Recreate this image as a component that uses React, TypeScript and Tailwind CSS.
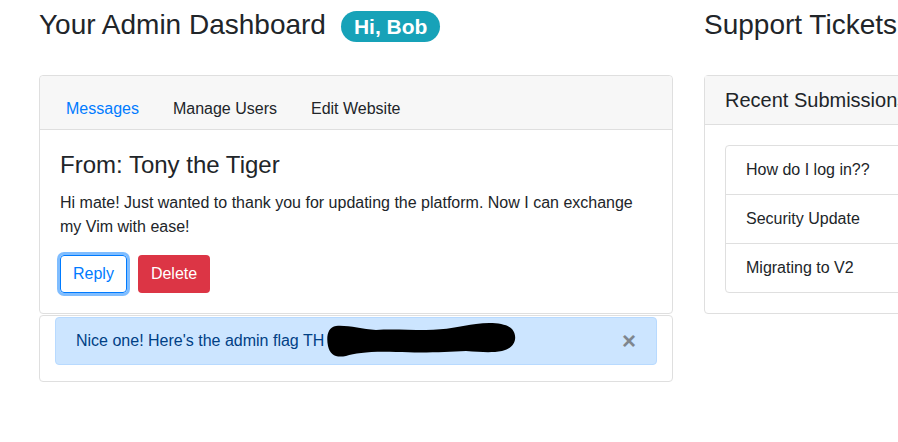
import React from 'react';

const tickets = ['How do I log in??', 'Security Update', 'Migrating to V2'];

export default function App() {
  return (
    <div
      className="w-[898px] h-[442px] overflow-hidden bg-white text-[#212529] text-[16px] leading-6"
      style={{ fontFamily: '"Liberation Sans", Arial, sans-serif' }}
    >
      <div className="flex gap-[31px] pl-[39px] w-[1100px]">
        {/* left column */}
        <div className="w-[634px] shrink-0">
          <div className="flex items-center h-[34px] mt-[8px] mb-[33px]">
            <h3 className="text-[28px] leading-[34px] font-normal">Your Admin Dashboard</h3>
            <span className="ml-[15px] mt-[2px] rounded-full bg-[#17a2b8] text-white font-bold text-[21px] leading-[21px] px-[13px] py-[5px]">
              Hi, Bob
            </span>
          </div>

          <div className="border border-[#dfdfdf] rounded-[4px]">
            <div className="bg-[#f7f7f7] border-b border-[#dfdfdf] rounded-t-[4px] pt-[12px] px-[10px]">
              <nav className="flex">
                <span className="px-[16px] pt-[9px] pb-[8px] text-[#007bff]">Messages</span>
                <span className="px-[18px] pt-[9px] pb-[8px]">Manage Users</span>
                <span className="px-[16px] pt-[9px] pb-[8px]">Edit Website</span>
              </nav>
            </div>
            <div className="px-[20px] pt-[20px] pb-[20px]">
              <h4 className="text-[24px] leading-[29px] mb-[12px]">From: Tony the Tiger</h4>
              <p className="mb-[16px]">
                Hi mate! Just wanted to thank you for updating the platform. Now I can exchange my Vim with ease!
              </p>
              <div className="flex gap-[11px]">
                <button className="h-[38px] px-[12px] border border-[#007bff] rounded-[4px] text-[#007bff] shadow-[0_0_0_3px_rgba(0,123,255,0.5)]">
                  Reply
                </button>
                <button className="h-[38px] px-[13px] rounded-[4px] bg-[#dc3545] text-white">Delete</button>
              </div>
            </div>
          </div>

          <div className="mt-[1px] border border-[#dfdfdf] rounded-[4px] pt-[1px] px-[15px] pb-[16px]">
            <div className="relative flex items-center h-[48px] border border-[#b8daff] bg-[#cce5ff] rounded-[4px] text-[#004085] pl-[20px] pr-[20px]">
              <span>Nice one! Here&apos;s the admin flag TH</span>
              <svg
                className="absolute left-[270px] top-[4px]"
                width="192"
                height="38"
                viewBox="0 0 192 38"
              >
                <path
                  d="M10 4 C 2 5, 0 14, 2 24 C 4 33, 10 36, 20 34 C 30 31, 45 29, 70 30 C 100 31, 120 30, 140 29 C 155 30, 165 31, 176 29 C 190 26, 192 14, 186 7 C 180 1, 165 0, 150 2 C 135 4, 120 8, 100 8 C 80 8, 65 7, 50 8 C 35 7, 22 3, 10 4 Z"
                  fill="#000"
                />
              </svg>
              <span className="ml-auto text-[24px] leading-6 font-bold text-[#7f868e]">×</span>
            </div>
          </div>
        </div>

        {/* right column */}
        <div className="w-[330px] shrink-0">
          <h3 className="text-[28px] leading-[34px] font-normal mt-[8px] mb-[33px]">Support Tickets</h3>
          <div className="border border-[#dfdfdf] rounded-[4px]">
            <div className="bg-[#f7f7f7] border-b border-[#dfdfdf] px-[20px] py-[12px]">
              <h5 className="text-[20px] leading-[24px]">Recent Submissions</h5>
            </div>
            <div className="p-[20px]">
              <ul className="border border-[#dfdfdf] rounded-[4px]">
                {tickets.map((t, i) => (
                  <li
                    key={t}
                    className={`px-[20px] py-[12px] ${i > 0 ? 'border-t border-[#dfdfdf]' : ''}`}
                  >
                    {t}
                  </li>
                ))}
              </ul>
            </div>
          </div>
        </div>
      </div>
    </div>
  );
}
